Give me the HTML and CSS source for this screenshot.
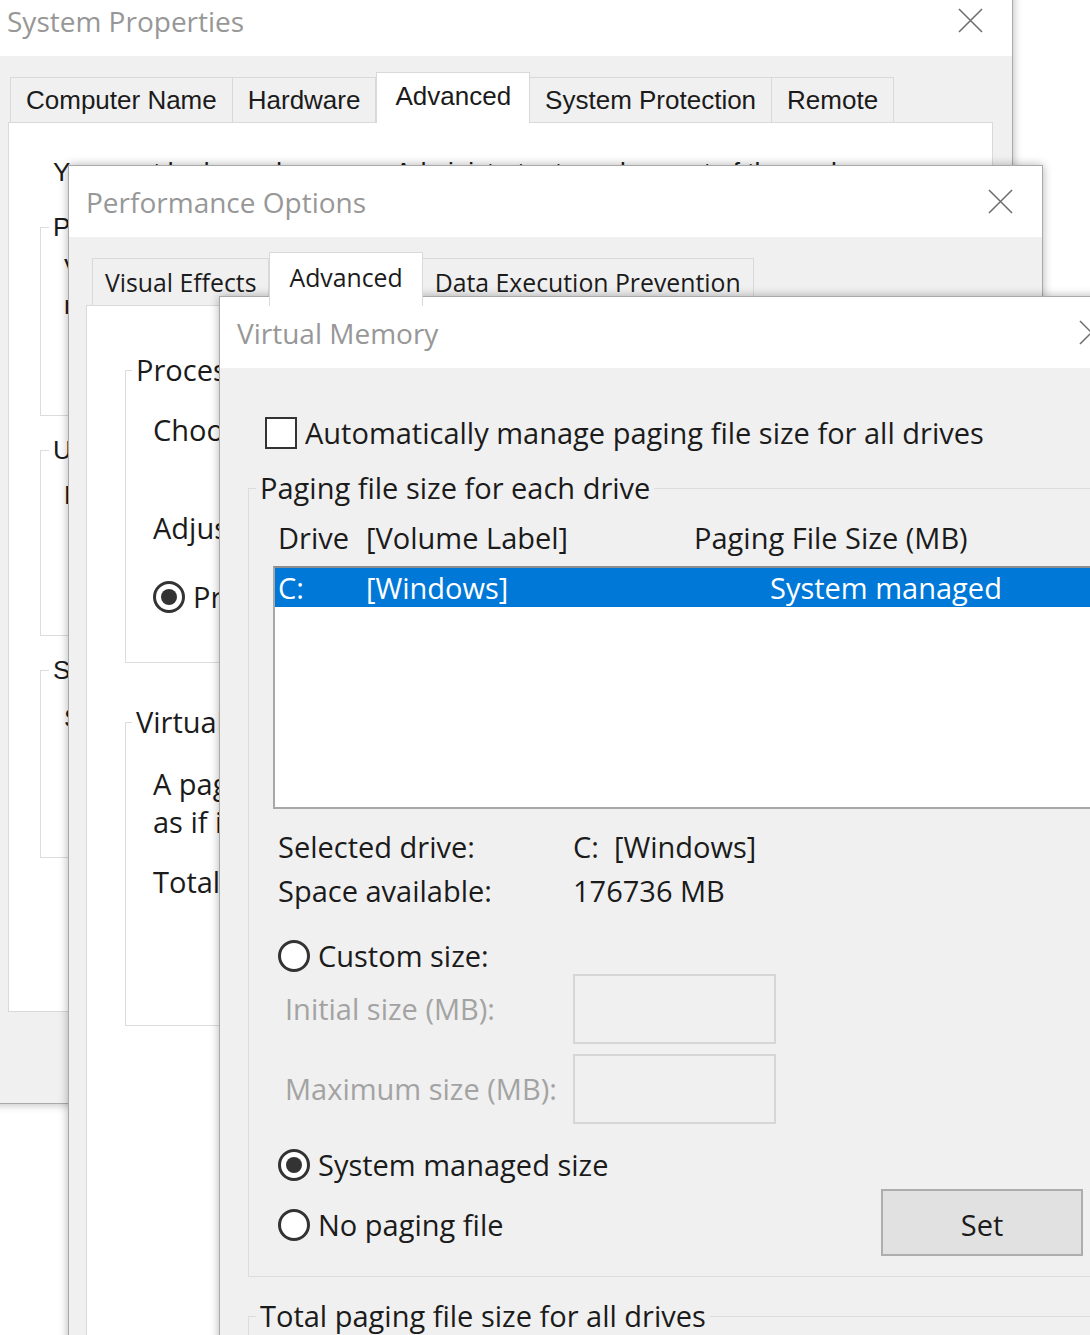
FILE: index.html
```html
<!DOCTYPE html>
<html lang="en">
<head>
<meta charset="utf-8">
<title>Virtual Memory</title>
<link rel="stylesheet" href="styles.css">
</head>
<body>
<main class="desktop">

  <section class="window win-sys">
    <header class="titlebar">
      <span class="title">System Properties</span>
      <svg class="close" viewBox="0 0 26 26"><path d="M1 1L25 25M25 1L1 25"/></svg>
    </header>
    <div class="win-body">
      <nav class="tabs">
        <span class="tab">Computer Name</span>
        <span class="tab">Hardware</span>
        <span class="tab selected">Advanced</span>
        <span class="tab">System Protection</span>
        <span class="tab">Remote</span>
      </nav>
      <div class="panel sys-panel">
        <p class="sys-note">You must be logged on as an Administrator to make most of these changes.</p>
        <fieldset class="group sys-g1">
          <legend>Performance</legend>
          <p class="l1">Visual effects, processor scheduling, memory usage,</p>
          <p class="l2">memory usage and virtual memory</p>
        </fieldset>
        <fieldset class="group sys-g2">
          <legend>User Profiles</legend>
          <p class="l1">Desktop settings related to your sign-in</p>
        </fieldset>
        <fieldset class="group sys-g3">
          <legend>Startup and Recovery</legend>
          <p class="l1">System startup, system failure, and debugging information</p>
        </fieldset>
      </div>
    </div>
  </section>

  <section class="window win-perf">
    <header class="titlebar">
      <span class="title">Performance Options</span>
      <svg class="close" viewBox="0 0 26 26"><path d="M1 1L25 25M25 1L1 25"/></svg>
    </header>
    <div class="win-body">
      <nav class="tabs">
        <span class="tab">Visual Effects</span>
        <span class="tab selected">Advanced</span>
        <span class="tab">Data Execution Prevention</span>
      </nav>
      <div class="panel perf-panel">
        <fieldset class="group perf-g1">
          <legend>Processor scheduling</legend>
          <p class="p1">Choose how to allocate processor resources.</p>
          <p class="p2">Adjust for best performance of:</p>
          <div class="radio-row p3"><span class="radio checked"></span><span>Programs</span></div>
        </fieldset>
        <fieldset class="group perf-g2">
          <legend>Virtual memory</legend>
          <p class="p1">A paging file is an area on the hard disk that Windows uses</p>
          <p class="p2">as if it were RAM.</p>
          <p class="p3">Total paging file size for all drives:</p>
        </fieldset>
      </div>
    </div>
  </section>

  <section class="window win-vm">
    <header class="titlebar">
      <span class="title">Virtual Memory</span>
      <svg class="close" viewBox="0 0 26 26"><path d="M1 1L25 25M25 1L1 25"/></svg>
    </header>
    <div class="win-body vm-body">
      <div class="check-row"><span class="checkbox"></span><span>Automatically manage paging file size for all drives</span></div>

      <fieldset class="group vm-g1">
        <legend>Paging file size for each drive</legend>
        <div class="vm-head"><span>Drive</span><span>[Volume Label]</span><span>Paging File Size (MB)</span></div>
        <div class="listbox">
          <div class="list-row selected"><span>C:</span><span>[Windows]</span><span>System managed</span></div>
        </div>
        <div class="drive-info">
          <span>Selected drive:</span><span>C:&nbsp; [Windows]</span>
          <span>Space available:</span><span>176736 MB</span>
        </div>
        <div class="radio-row custom-row"><span class="radio"></span><span>Custom size:</span></div>
        <div class="size-grid">
          <span class="dis">Initial size (MB):</span><span class="field"></span>
          <span class="dis">Maximum size (MB):</span><span class="field"></span>
        </div>
        <div class="bottom-row">
          <div class="radio-col">
            <div class="radio-row"><span class="radio checked"></span><span>System managed size</span></div>
            <div class="radio-row"><span class="radio"></span><span>No paging file</span></div>
          </div>
          <button class="set-btn" type="button">Set</button>
        </div>
      </fieldset>

      <fieldset class="group vm-g2">
        <legend>Total paging file size for all drives</legend>
      </fieldset>
    </div>
  </section>

</main>
</body>
</html>
```

FILE: styles.css
```css
* { box-sizing: border-box; }
html, body { margin: 0; padding: 0; }
body {
  width: 1090px;
  height: 1335px;
  overflow: hidden;
  background: #ffffff;
  color: #1b1b1b;
  font-family: "Open Sans", "Noto Sans", sans-serif;
  font-size: 29px;
  line-height: 34px;
}
p { margin: 0; }

.desktop {
  position: relative;
  width: 1090px;
  height: 1335px;
  overflow: hidden;
}

/* ---------- generic window ---------- */
.window {
  position: absolute;
  display: flex;
  flex-direction: column;
  background: #f0f0f0;
  border: 1px solid #a9a9a9;
  box-shadow: 0 0 9px rgba(0, 0, 0, 0.3);
}
.titlebar {
  flex: none;
  height: 71px;
  background: #ffffff;
  display: flex;
  align-items: center;
  justify-content: space-between;
  padding: 0 29px 0 17px;
}
.title {
  font-family: "Open Sans", "Noto Sans", sans-serif;
  font-size: 28px;
  color: #979797;
  white-space: nowrap;
}
.close {
  flex: none;
  width: 25px;
  height: 25px;
  fill: none;
  stroke: #6f6f6f;
  stroke-width: 1.6;
}
.win-body {
  flex: 1;
  display: flex;
  flex-direction: column;
  min-height: 0;
}

/* ---------- tabs ---------- */
.tabs {
  flex: none;
  display: flex;
  align-items: flex-end;
}
.tab {
  display: flex;
  align-items: center;
  white-space: nowrap;
  background: #f0f0f0;
  border: 1px solid #d9d9d9;
  border-bottom: none;
}
.tab + .tab { border-left: none; }
.tab.selected {
  position: relative;
  z-index: 1;
  background: #ffffff;
  border-left: 1px solid #d9d9d9;
  margin-bottom: -1px;
}
.panel {
  flex: none;
  background: #ffffff;
  border: 1px solid #d9d9d9;
}

/* ---------- group boxes ---------- */
.group {
  margin: 0;
  padding: 0;
  min-width: 0;
  border: 1px solid #dcdcdc;
}
.group legend {
  padding: 0 4px;
}

/* ---------- System Properties ---------- */
.win-sys {
  left: -11px;
  top: -16px;
  width: 1024px;
  height: 1120px;
  font-family: "Liberation Sans", Arial, sans-serif;
  font-size: 26px;
  line-height: 30px;
}
.win-sys .win-body { padding-top: 16px; }
.win-sys .tabs { height: 50px; padding-left: 20px; }
.win-sys .tab { height: 45px; padding: 0 15px; }
.win-sys .tab.selected { height: 51px; padding: 0 18px 5px; }
.sys-panel {
  margin: 0 19px 0 18px;
  height: 890px;
  padding: 34px 0 0 31px;
}
.sys-note { padding-left: 13px; white-space: nowrap; }
.win-sys .group legend { margin-left: 8px; }
.win-sys .group p { padding-left: 23px; white-space: nowrap; }
.sys-g1 { margin-top: 25px; height: 204px; }
.sys-g1 .l1 { margin-top: 11px; }
.sys-g1 .l2 { margin-top: 7px; }
.sys-g2 { margin-top: 19px; height: 201px; }
.sys-g2 .l1 { margin-top: 15px; }
.sys-g3 { margin-top: 19px; height: 203px; }
.sys-g3 .l1 { margin-top: 18px; }

/* ---------- Performance Options ---------- */
.win-perf {
  left: 68px;
  top: 165px;
  width: 975px;
  height: 1250px;
}
.win-perf .win-body { padding-top: 15px; }
.win-perf .tabs { height: 53px; padding-left: 23px; font-size: 24.8px; }
.win-perf .tab { height: 47px; padding: 0 12px; }
.win-perf .tab.selected { height: 54px; padding: 0 19px 6px; }
.perf-panel {
  margin-left: 17px;
  height: 1150px;
  padding-left: 38px;
}
.win-perf .group legend { margin-left: 6px; }
.win-perf .group p,
.win-perf .group .radio-row { padding-left: 27px; white-space: nowrap; }
.perf-g1 { margin-top: 47px; height: 310px; }
.perf-g1 .p1 { margin-top: 26px; }
.perf-g1 .p2 { margin-top: 64px; }
.perf-g1 .p3 { margin-top: 35px; }
.perf-g2 { margin-top: 42px; height: 321px; }
.perf-g2 .p1 { margin-top: 28px; }
.perf-g2 .p2 { margin-top: 4px; }
.perf-g2 .p3 { margin-top: 26px; }

/* ---------- controls ---------- */
.radio-row {
  display: flex;
  align-items: center;
  gap: 8px;
  white-space: nowrap;
}
.radio {
  flex: none;
  width: 32px;
  height: 32px;
  border: 3px solid #333333;
  border-radius: 50%;
  background: #ffffff;
  display: grid;
  place-items: center;
}
.radio.checked::after {
  content: "";
  width: 16px;
  height: 16px;
  border-radius: 50%;
  background: #333333;
}
.checkbox {
  flex: none;
  width: 32px;
  height: 32px;
  border: 2px solid #333333;
  background: #ffffff;
}

/* ---------- Virtual Memory ---------- */
.win-vm {
  left: 219px;
  top: 296px;
  width: 915px;
  height: 1100px;
}
.check-row {
  margin: 49px 0 0 45px;
  height: 32px;
  display: flex;
  align-items: center;
  gap: 8px;
  white-space: nowrap;
}
.vm-g1, .vm-g2 {
  margin: 22px 28px 0 28px;
}
.win-vm .group legend { margin-left: 7px; white-space: nowrap; }
.vm-head {
  margin-top: 16px;
  padding-left: 29px;
  display: grid;
  grid-template-columns: 88px 328px auto;
  white-space: nowrap;
}
.listbox {
  margin: 11px 5px 0 24px;
  height: 243px;
  background: #ffffff;
  border: 2px solid #a8a8a8;
  border-top-color: #8e8e8e;
}
.list-row {
  height: 39px;
  padding-left: 3px;
  display: grid;
  grid-template-columns: 88px 404px auto;
  align-items: center;
  white-space: nowrap;
}
.list-row.selected {
  background: #0078d7;
  color: #ffffff;
}
.drive-info {
  margin-top: 16px;
  padding-left: 29px;
  display: grid;
  grid-template-columns: 295px auto;
  line-height: 44px;
  white-space: nowrap;
}
.custom-row {
  margin-top: 25px;
  height: 36px;
  padding-left: 29px;
}
.size-grid {
  padding-left: 36px;
  display: grid;
  grid-template-columns: 288px 203px;
  grid-auto-rows: 70px;
  row-gap: 10px;
  align-items: center;
}
.dis { color: #a3a3a3; white-space: nowrap; }
.field {
  height: 70px;
  border: 2px solid #d6d6d6;
  background: #f0f0f0;
}
.bottom-row {
  margin-top: 19px;
  padding: 0 21px 20px 29px;
  display: flex;
  justify-content: space-between;
  align-items: flex-start;
}
.radio-col {
  display: flex;
  flex-direction: column;
  gap: 16px;
}
.radio-col .radio-row { height: 44px; }
.set-btn {
  margin-top: 46px;
  width: 202px;
  height: 67px;
  background: #e1e1e1;
  border: 2px solid #adadad;
  border-radius: 0;
  font-family: "Open Sans", "Noto Sans", sans-serif;
  font-size: 29px;
  color: #1b1b1b;
  padding: 4px 0 0 0;
  line-height: 34px;
}
.vm-g2 { height: 80px; }
```
